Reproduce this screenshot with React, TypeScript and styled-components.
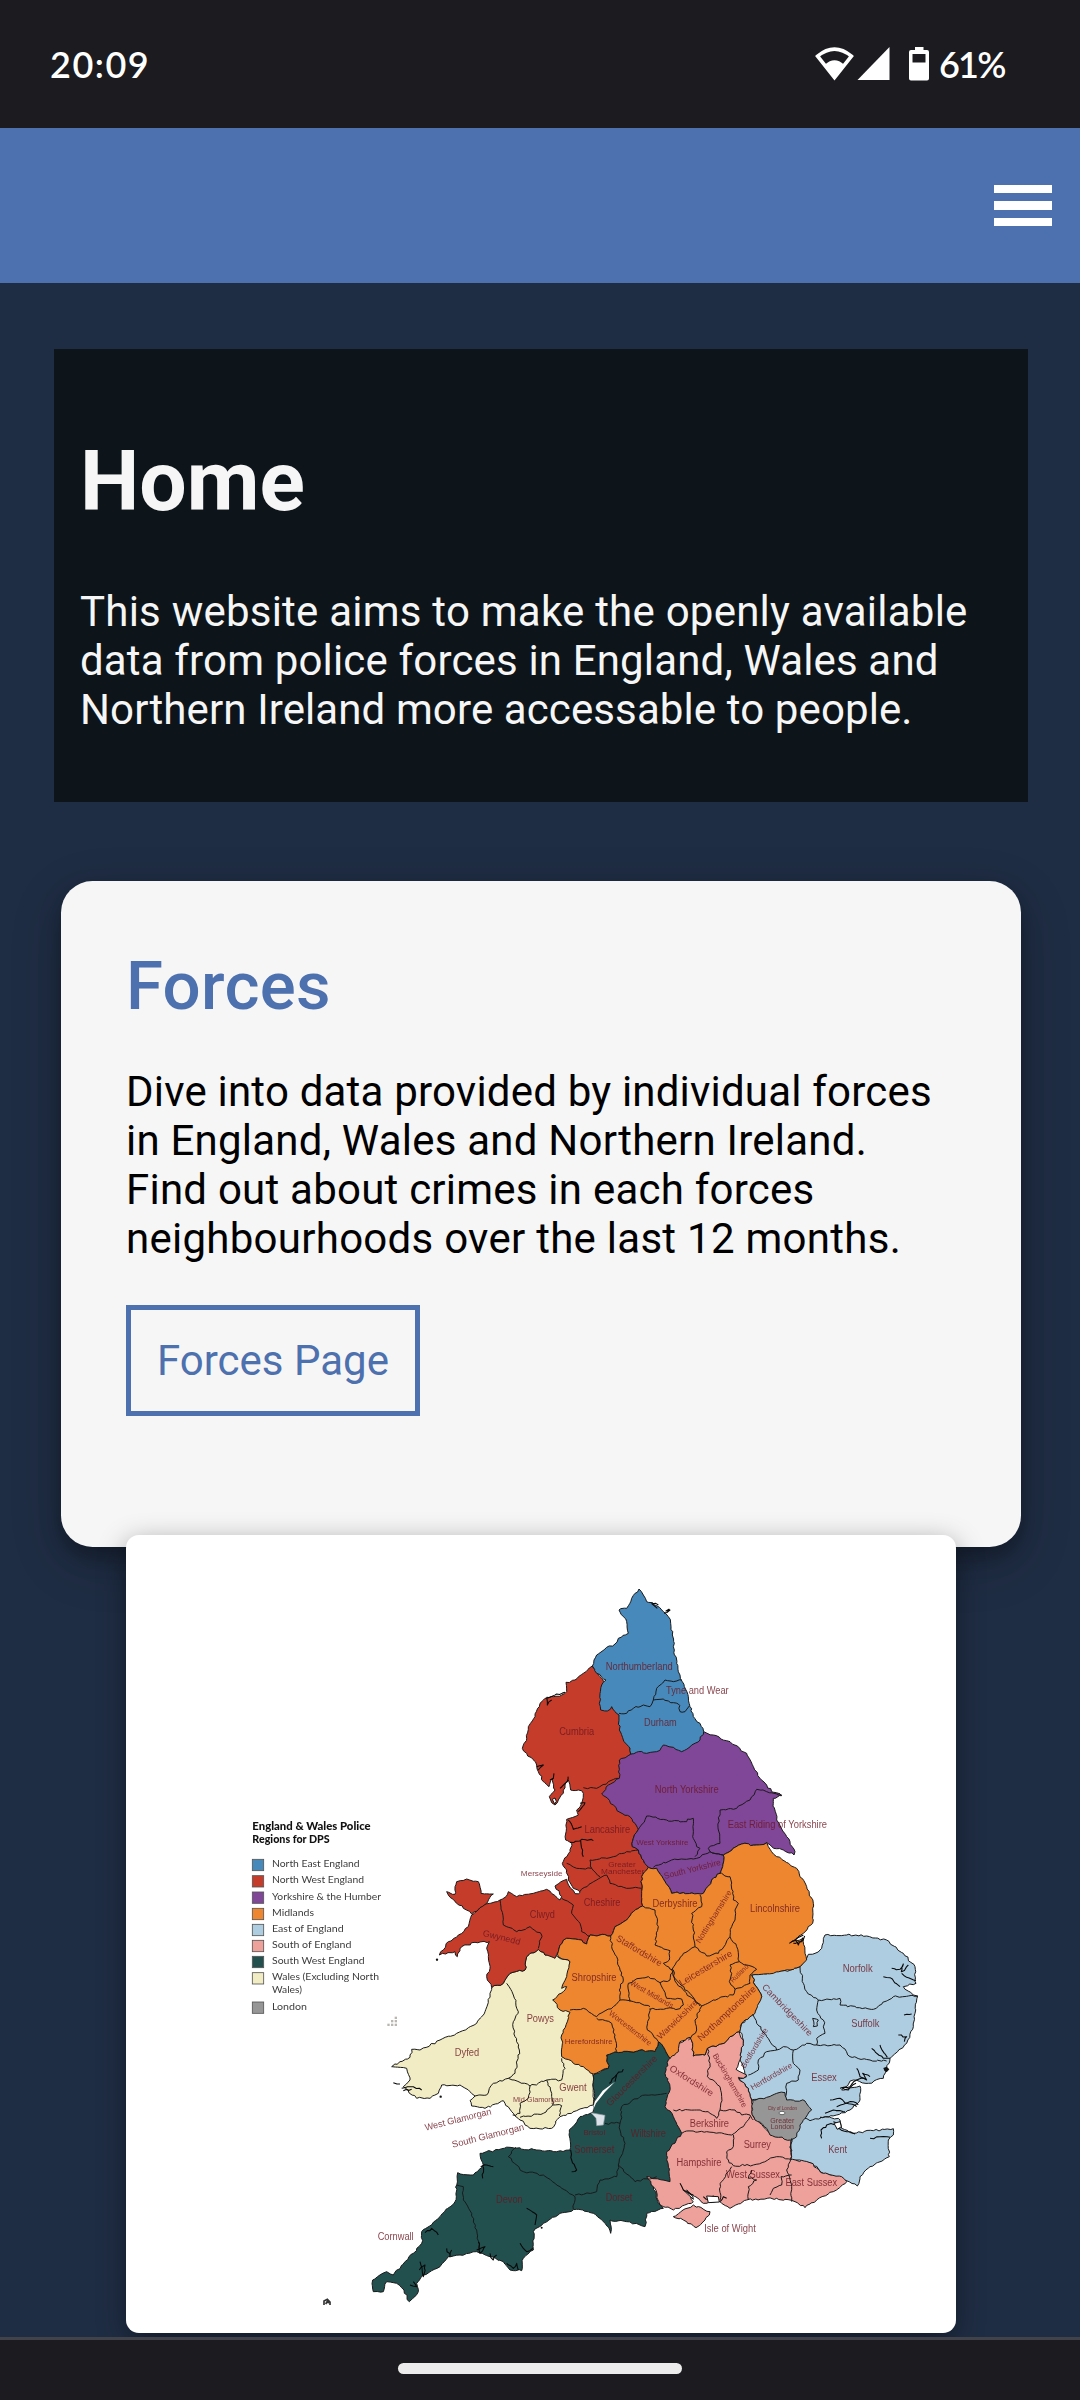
import React from "react";
import styled, { createGlobalStyle } from "styled-components";

const GlobalStyle = createGlobalStyle`
  *, *::before, *::after { box-sizing: border-box; }
  body { margin: 0; background: #1f2d44; font-family: Roboto, "Liberation Sans", sans-serif; font-size: 42px; }
`;

const Screen = styled.div`
  display: flex;
  flex-direction: column;
  width: 1080px;
  height: 2400px;
  overflow: hidden;
  background: #1f2d44;
`;

const StatusBar = styled.header`
  flex: none;
  display: flex;
  align-items: center;
  justify-content: space-between;
  height: 128px;
  padding: 0 75px 0 50px;
  background: #1c1b20;
  color: #fff;
  font: 600 36px/44px Lato, "Open Sans", sans-serif;
`;

const Clock = styled.span`
  letter-spacing: 1.5px;
`;

const Indicators = styled.div`
  display: flex;
  align-items: center;
`;

const StatusIcons = styled.svg`
  width: 116px;
  height: 36px;
  margin-right: 9px;
`;

const Percent = styled.span`
  width: 66px;
  white-space: nowrap;
  letter-spacing: -1.8px;
`;

const NavBar = styled.nav`
  flex: none;
  display: flex;
  align-items: center;
  justify-content: flex-end;
  height: 155px;
  padding: 0 28px;
  background: #4d70ae;
`;

const MenuButton = styled.button`
  display: flex;
  flex-direction: column;
  gap: 8.2px;
  width: 58px;
  padding: 0;
  border: 0;
  background: none;
`;

const MenuLine = styled.span`
  height: 8.5px;
  background: #fff;
`;

const Main = styled.main`
  flex: 1;
  min-height: 0;
  overflow: hidden;
  padding: 66px 52px 0 54px;
`;

const Hero = styled.section`
  width: 974px;
  height: 453px;
  padding: 84px 26px 0;
  background: #0d151b;
  color: #f6f6f6;
`;

const Title = styled.h1`
  margin: 0 0 56px;
  font-size: 84px;
  line-height: 98px;
  font-weight: 700;
`;

const Copy = styled.p`
  margin: 0;
  font-size: 42px;
  line-height: 49px;
`;

const Line = styled.span<{ $track: number }>`
  display: block;
  white-space: nowrap;
  letter-spacing: ${(p) => p.$track}px;
`;

const Card = styled.section`
  width: 960px;
  height: 666px;
  margin: 79px 0 0 7px;
  padding: 66px 65px 0;
  border-radius: 31.5px;
  background: #f6f6f6;
  color: #000;
  box-shadow: 0 10px 21px rgba(0, 0, 0, 0.3), 0 16px 52px rgba(0, 0, 0, 0.19);
`;

const CardTitle = styled.h2`
  margin: 0 0 41px;
  color: #4d70ae;
  font-size: 67.2px;
  line-height: 79px;
  font-weight: 500;
  letter-spacing: 0.3px;
`;

const PageLink = styled.a`
  display: inline-flex;
  align-items: center;
  height: 111px;
  margin-top: 42px;
  padding: 0 26px;
  border: 5px solid #4d70ae;
  color: #4d70ae;
  line-height: 49px;
`;

const MapFrame = styled.figure`
  position: relative;
  width: 830px;
  height: 798px;
  margin: -12px 0 0 72px;
  border-radius: 13px;
  overflow: hidden;
  background: #fff;
`;

const MapShadow = styled.div`
  border-radius: 13px;
  filter: drop-shadow(0 8px 14px rgba(0, 0, 0, 0.4));
`;

const MapSvg = styled.svg`
  display: block;
  width: 100%;
  height: 100%;
`;

const GestureBar = styled.footer`
  flex: none;
  display: flex;
  justify-content: center;
  height: 63px;
  padding-top: 23px;
  border-top: 3px solid #42434a;
  background: #1c1b20;
`;

const Handle = styled.div`
  width: 284px;
  height: 11px;
  border-radius: 6px;
  background: #ececec;
`;

/* Map outlines are sparse control points; rough() adds small bends between them. */
const noise = (x: number, y: number) => {
  const n = Math.sin(x * 12.9898 + y * 78.233) * 43758.5453;
  return (n - Math.floor(n)) * 2 - 1;
};

function rough(points: string, closed = false): string {
  const p = points.trim().split(/\s+/).map((s) => s.split(",").map(Number));
  if (closed) p.push(p[0]);
  let d = `M${p[0][0]} ${p[0][1]}`;
  for (let i = 1; i < p.length; i++) {
    let [x0, y0] = p[i - 1];
    let [x1, y1] = p[i];
    const flip = x0 > x1 || (x0 === x1 && y0 > y1);
    if (flip) [x0, y0, x1, y1] = [x1, y1, x0, y0];
    const len = Math.hypot(x1 - x0, y1 - y0);
    const steps = Math.max(1, Math.round(len / 9));
    const mids: string[] = [];
    for (let k = 1; k < steps; k++) {
      const x = x0 + ((x1 - x0) * k) / steps;
      const y = y0 + ((y1 - y0) * k) / steps;
      mids.push(`L${(x + noise(x, y) * 3).toFixed(1)} ${(y + noise(y, x) * 3).toFixed(1)}`);
    }
    if (flip) mids.reverse();
    d += mids.join("") + `L${p[i][0]} ${p[i][1]}`;
  }
  return closed ? d + "Z" : d;
}

const C = {
  northEast: "#4789bb",
  northWest: "#c63c2b",
  yorkshire: "#804698",
  midlands: "#ee8630",
  east: "#afcde1",
  south: "#eea09b",
  southWest: "#21504f",
  wales: "#f1ecc4",
  london: "#969696",
};

const regions: [string, string][] = [
  [C.wales, "395,1283 390,1300 375,1355 350,1390 290,1420 240,1440 180,1470 155,1468 150,1492 120,1505 95,1520 140,1525 150,1560 130,1580 170,1615 210,1615 235,1600 245,1575 300,1575 330,1595 345,1608 330,1622 335,1638 375,1645 430,1622 455,1655 480,1680 510,1705 575,1705 600,1670 650,1652 700,1635 700,1530 660,1400 640,1300 630,1205 585,1185 555,1185 535,1168 500,1190 495,1230 450,1240 430,1270"],
  [C.northWest, "697,318 670,340 645,360 618,367 620,395 605,405 580,410 555,415 540,430 525,470 505,500 500,535 487,565 500,580 530,615 535,635 550,665 567,680 578,655 585,690 568,710 575,728 585,735 595,720 610,700 615,675 625,660 632,690 655,690 670,700 665,730 650,750 655,765 620,778 617,840 635,850 630,875 607,910 620,930 625,960 640,985 660,997 645,1001 632,985 620,958 585,978 605,1010 600,1020 560,988 520,1000 470,1010 445,995 438,1010 420,1020 370,1035 335,1065 325,1100 295,1125 265,1145 238,1185 285,1175 292,1190 305,1160 345,1147 388,1145 380,1165 385,1190 390,1225 380,1250 395,1283 430,1270 450,1240 495,1230 500,1190 535,1168 555,1185 585,1195 595,1175 600,1155 620,1135 665,1140 680,1152 690,1125 720,1125 752,1128 765,1100 800,1080 820,1055 848,1038 845,1000 845,950 865,922 845,895 835,870 817,860 820,835 835,808 850,760 800,600 812,582 810,500 760,400"],
  [C.northWest, "290,965 320,957 355,965 363,1000 400,1002 382,1028 335,1062 310,1045 285,1025 265,1005 260,995 285,1003 285,980"],
  [C.yorkshire, "778,600 812,583 900,540 1031,515 1060,525 1110,545 1160,580 1180,620 1200,655 1220,675 1235,695 1265,707 1240,715 1240,730 1250,780 1280,830 1305,875 1302,885 1270,870 1235,860 1220,848 1190,855 1145,852 1090,885 1088,920 1080,940 1055,960 1030,1000 970,998 935,1000 915,965 890,925 865,922 845,895 835,870 817,860 820,835 835,808 810,770 780,757 760,735 725,702 745,675 778,655"],
  [C.northEast, "837,87 850,105 860,125 890,137 910,155 925,170 932,190 937,225 943,270 950,310 960,345 973,380 985,410 990,440 1000,470 1020,490 1031,515 1020,540 995,555 965,575 940,562 910,555 890,575 860,580 835,575 812,582 810,565 790,540 778,510 777,465 755,440 742,453 722,450 718,430 720,400 725,375 738,360 710,340 697,318 710,285 740,262 765,252 775,235 805,220 800,185 790,170 777,150 800,145 815,115"],
  [C.east, "1175,1245 1290,1230 1320,1220 1340,1195 1345,1183 1365,1180 1385,1165 1395,1125 1460,1125 1520,1128 1580,1140 1630,1180 1665,1220 1668,1270 1630,1280 1660,1305 1673,1308 1665,1360 1660,1400 1640,1450 1590,1495 1580,1525 1570,1555 1525,1570 1480,1560 1445,1590 1500,1578 1500,1620 1470,1650 1430,1665 1380,1672 1435,1675 1445,1705 1480,1720 1540,1712 1600,1706 1600,1725 1585,1740 1588,1790 1530,1820 1500,1850 1492,1878 1450,1860 1390,1840 1355,1810 1320,1800 1292,1798 1295,1720 1230,1620 1175,1620 1165,1585 1135,1555 1160,1550 1140,1500 1150,1440 1140,1415 1145,1390 1180,1360 1205,1310 1185,1275"],
  [C.south, "990,1432 998,1450 1000,1488 1035,1485 1042,1465 1092,1450 1110,1430 1138,1415 1150,1440 1140,1500 1128,1528 1160,1545 1150,1555 1135,1552 1165,1585 1175,1620 1180,1670 1230,1720 1292,1735 1292,1798 1350,1808 1390,1840 1445,1850 1460,1865 1420,1895 1370,1920 1335,1943 1305,1925 1250,1915 1160,1920 1110,1945 1080,1925 1030,1930 980,1890 1000,1925 940,1950 900,1935 885,1885 860,1855 850,1700 900,1500 955,1450"],
  [C.southWest, "740,1485 760,1478 810,1475 840,1470 885,1475 895,1445 910,1460 930,1495 925,1500 915,1540 930,1580 915,1640 940,1670 965,1720 920,1775 930,1865 860,1850 880,1880 895,1930 910,1945 860,1960 855,2000 800,1985 750,1980 752,2020 735,1990 700,1960 650,1948 600,1960 550,1990 520,2015 520,2070 490,2095 485,2132 450,2130 430,2105 390,2090 350,2075 300,2085 265,2090 240,2120 190,2145 170,2170 175,2195 148,2225 132,2190 110,2170 80,2165 70,2195 40,2195 38,2160 80,2135 100,2145 160,2080 185,2050 185,2015 240,1970 285,1925 293,1838 340,1845 370,1815 360,1780 450,1762 530,1770 590,1775 630,1770 628,1710 660,1670 700,1655 703,1630 700,1545 745,1525"],
  [C.midlands, "865,922 890,925 915,965 935,1000 970,998 1030,1000 1055,960 1080,940 1088,920 1090,885 1145,852 1190,855 1220,848 1225,860 1250,890 1310,925 1340,980 1360,1030 1358,1090 1330,1120 1295,1145 1330,1135 1335,1180 1340,1200 1320,1220 1290,1230 1240,1240 1175,1245 1185,1275 1205,1310 1185,1360 1145,1390 1138,1415 1110,1430 1092,1450 1042,1465 1035,1485 1000,1488 998,1450 990,1432 960,1445 955,1475 930,1495 910,1460 895,1445 885,1475 840,1470 810,1475 760,1478 740,1485 745,1525 700,1542 670,1520 640,1510 605,1490 605,1425 630,1357 600,1350 578,1320 610,1295 620,1280 605,1285 620,1250 630,1205 595,1190 595,1175 600,1155 620,1135 665,1140 680,1152 690,1125 720,1125 752,1128 765,1100 800,1080 820,1055 848,1038 845,1000 845,950"],
  [C.london, "1178,1620 1220,1612 1250,1600 1275,1598 1280,1620 1335,1623 1355,1650 1335,1675 1320,1695 1310,1730 1292,1740 1255,1732 1230,1725 1220,1705 1185,1680 1175,1655"],
  [C.south, "940,1970 1000,1935 1050,1955 1035,1980 1008,2003 970,1980"],
];

const countyLines = [
  "777,460 800,460 820,445 850,435 870,440 880,420 900,418 940,428 955,432 960,455 975,455 988,438",
  "880,420 890,385 915,360 940,365 965,360",
  "670,683 710,685 745,665 775,655",
  "1265,705 1220,695 1190,688 1170,720 1130,745 1080,750 1075,810 1080,850 1045,865 1050,875 1090,885",
  "835,808 860,768 920,780 970,785 1000,775 998,830 1010,860 1020,865 1005,890",
  "880,922 935,900 1010,895 1050,875 1090,885",
  "620,910 650,925 695,925 720,950",
  "695,925 690,900 760,890 800,875 835,870",
  "660,995 710,960 740,945 750,970 800,985 845,985",
  "420,1020 430,1095 470,1115 510,1100 545,1125 535,1165",
  "605,1015 640,1035 635,1060 660,1090 665,1115 690,1130",
  "848,1038 885,1050 895,1100 885,1155 930,1172 928,1200 910,1210 940,1230",
  "1020,1005 1025,1040 995,1060 1000,1110 1005,1160",
  "1005,1160 1040,1188 1075,1180 1110,1130",
  "1080,940 1110,950 1120,1020 1135,1030 1125,1050 1125,1080 1115,1100 1110,1130 1130,1160 1138,1205",
  "1005,1160 970,1180 950,1205 935,1230 950,1270 990,1310 1025,1338 1060,1320 1120,1305 1125,1288",
  "1138,1205 1110,1215 1115,1240 1108,1265 1125,1288 1170,1270 1170,1245 1190,1228 1160,1215 1138,1205",
  "1025,1338 1005,1380 1010,1410 985,1440",
  "752,1128 755,1160 770,1190 780,1230 790,1260 778,1290 780,1320",
  "630,1350 670,1345 710,1370 760,1340 780,1320 820,1325 870,1340",
  "810,1325 805,1270 840,1255 865,1250 900,1268 920,1315 965,1317 970,1335 960,1346 920,1345 870,1348",
  "900,1268 930,1260 940,1230 945,1255 990,1300 1020,1338",
  "710,1375 755,1390 765,1425 770,1475",
  "870,1345 862,1410 895,1445",
  "440,1270 460,1305 475,1355 460,1385 465,1430 478,1470 465,1540 445,1555",
  "445,1555 510,1578 560,1560 605,1560 615,1525 605,1495",
  "445,1555 400,1570 380,1605 345,1608",
  "510,1578 505,1615 480,1630 480,1660 458,1665",
  "560,1560 575,1600 578,1635 605,1637 598,1668",
  "480,1672 550,1660 578,1635",
  "1320,1220 1330,1270 1340,1295 1375,1320",
  "1375,1320 1440,1315 1440,1335 1490,1343 1540,1348 1600,1310 1673,1308",
  "1375,1320 1370,1350 1390,1380 1395,1420 1370,1435 1370,1455",
  "1358,1375 1375,1380 1372,1398 1360,1400 1358,1375",
  "1370,1455 1440,1455 1470,1490 1530,1500 1580,1503",
  "1370,1455 1340,1450 1300,1470 1270,1460 1250,1470 1220,1430 1190,1390 1178,1362",
  "1250,1470 1220,1475 1195,1500 1195,1530 1165,1545",
  "1300,1470 1300,1510 1320,1530 1315,1560 1280,1570 1277,1610",
  "1335,1675 1350,1682 1385,1672",
  "1295,1735 1292,1798",
  "1042,1465 1050,1510 1042,1550 1080,1580 1085,1610 1080,1650",
  "940,1650 1010,1650 1045,1655 1070,1675 1080,1650 1125,1650 1145,1665 1170,1665 1180,1680",
  "965,1720 980,1713 1040,1715 1115,1725 1150,1700 1170,1670",
  "1120,1725 1120,1760 1100,1775 1105,1800 1120,1817 1180,1815 1250,1790 1292,1798",
  "1115,1820 1080,1870 1080,1920",
  "1292,1798 1280,1830 1295,1880 1295,1925",
  "1165,1920 1165,1880 1190,1860 1165,1855 1175,1830",
  "1230,1905 1240,1885 1265,1875 1263,1850 1295,1845",
  "290,1875 310,1880 310,1920 335,1960 350,2010 360,2070",
  "468,1762 445,1790 490,1835 550,1845 600,1880 645,1910 640,1948",
  "645,1905 710,1895 720,1860 770,1850 775,1815 825,1865 890,1850",
  "775,1815 795,1750 780,1710 785,1640 840,1610 920,1600",
  "735,1690 780,1690",
];

const inlets = [
  "615,397 590,402 560,412", "560,412 562,435 575,420", "530,620 550,615 535,630", "570,660 580,655 582,640", "600,685 622,665 624,650",
  "895,135 875,131 892,145", "912,160 930,150 918,153 928,147",
  "660,730 675,728 655,755", "625,780 640,808 665,800", "630,847 665,838 700,842", "662,842 670,890",
  "1288,1150 1310,1135 1330,1125", "1300,1150 1325,1145 1334,1128", "1305,1140 1315,1155 1328,1133",
  "1595,1225 1620,1228 1630,1212 1624,1235 1645,1215", "1570,1250 1590,1253 1620,1280", "1625,1240 1640,1252 1668,1262",
  "1632,1365 1655,1362", "1615,1425 1640,1430 1633,1445", "1535,1465 1570,1495 1590,1495", "1560,1455 1582,1492",
  "1440,1585 1470,1580 1490,1560 1515,1555", "1445,1582 1465,1590 1488,1570", "1490,1525 1500,1550 1520,1560 1508,1540 1530,1550",
  "1410,1620 1440,1615 1460,1630 1490,1640", "1430,1640 1450,1633 1480,1625 1495,1635", "1395,1660 1420,1650 1455,1655",
  "1385,1735 1383,1710 1400,1695 1430,1690", "1430,1705 1460,1715 1485,1722", "1530,1735 1560,1730 1590,1732", "1420,1685 1440,1690 1435,1705",
  "960,1870 970,1890 1000,1905", "1030,1910 1050,1925 1060,1908 1075,1922", "1080,1925 1090,1910 1100,1915",
  "362,1820 380,1815 400,1820", "370,1820 368,1855", "500,1945 530,1965 525,1995", "480,2050 500,2075 518,2065",
  "355,2045 360,2080 375,2060 350,2070", "260,2065 270,2090 275,2070", "180,2105 190,2150 195,2115 178,2130", "150,2175 170,2180 160,2165",
  "195,2018 215,2005 235,2025", "390,2080 400,2100 410,2085", "440,2110 460,2125 470,2110 475,2130",
  "748,1570 765,1550 790,1528", "765,1565 770,1545", "632,1770 635,1800 650,1830 635,1835",
  "100,1568 120,1572", "125,1585 160,1580 185,1590", "130,1592 155,1588",
];

type Label = [string, number, number, number, number?, number?];
const labels: Label[] = [
  ["Northumberland", 838, 320, 201], ["Tyne and Wear", 1012, 393, 188], ["Durham", 901, 488, 98], ["Cumbria", 650, 515, 105],
  ["North Yorkshire", 980, 690, 192], ["Lancashire", 742, 809, 137], ["West Yorkshire", 907, 846, 157, 23], ["Merseyside", 545, 941, 125, 23],
  ["Greater", 786, 914, 82, 23], ["Manchester", 788, 934, 130, 23], ["Cheshire", 726, 1028, 110], ["Clwyd", 547, 1064, 75],
  ["Gwynedd", 425, 1132, 115, 27, 14], ["Derbyshire", 945, 1031, 135], ["East Riding of Yorkshire", 1252, 795, 298],
  ["South Yorkshire", 997, 927, 175, 26, -14], ["Nottinghamshire", 1061, 1070, 182, 24, -58], ["Lincolnshire", 1245, 1045, 150],
  ["Staffordshire", 838, 1172, 155, 28, 31], ["Leicestershire", 1037, 1224, 180, 28, -31], ["Shropshire", 702, 1254, 135],
  ["West Midlands", 876, 1303, 145, 23, 30], ["Warwickshire", 952, 1378, 158, 26, -44], ["Worcestershire", 811, 1404, 155, 24, 38],
  ["Northamptonshire", 1100, 1360, 228, 28, -43], ["Rutland", 1138, 1240, 68, 21, -45], ["Norfolk", 1493, 1227, 90], ["Suffolk", 1516, 1390, 85],
  ["Cambridgeshire", 1282, 1350, 205, 27, 46], ["Bedfordshire", 1183, 1464, 135, 23, -59], ["Hertfordshire", 1234, 1549, 140, 24, -30],
  ["Essex", 1392, 1553, 77], ["Kent", 1433, 1769, 57], ["Buckinghamshire", 1110, 1561, 182, 24, 60], ["Oxfordshire", 995, 1562, 150, 28, 32],
  ["Berkshire", 1048, 1691, 118], ["Surrey", 1192, 1754, 82], ["Hampshire", 1017, 1808, 135], ["West Sussex", 1179, 1844, 162],
  ["East Sussex", 1354, 1868, 155], ["Isle of Wight", 1110, 2005, 155], ["City of London", 1267, 1644, 88, 14], ["Greater", 1267, 1682, 72, 23],
  ["London", 1267, 1699, 70, 23], ["Powys", 541, 1375, 82], ["Dyfed", 321, 1477, 73], ["Herefordshire", 686, 1444, 143, 24],
  ["Gwent", 639, 1584, 82], ["Mid Glamorgan", 534, 1619, 150, 22], ["West Glamorgan", 294, 1678, 205, 28, -14],
  ["South Glamorgan", 384, 1727, 222, 28, -14], ["Gloucestershire", 815, 1562, 202, 28, -45], ["Bristol", 703, 1716, 65, 24],
  ["Somerset", 703, 1769, 120], ["Wiltshire", 865, 1720, 105], ["Devon", 448, 1918, 80], ["Dorset", 777, 1912, 80], ["Cornwall", 107, 2031, 108],
];

const MapLabel = styled.text`
  font-family: "Liberation Sans", Arial, sans-serif;
  fill: #6a1620;
  fill-opacity: 0.82;
  text-anchor: middle;
`;

const LegendText = styled.text<{ $bold?: boolean }>`
  font-family: Lato, "Open Sans", sans-serif;
  font-size: ${(p) => (p.$bold ? 31 : 29)}px;
  font-weight: ${(p) => (p.$bold ? 900 : 400)};
  fill: ${(p) => (p.$bold ? "#111" : "#3c3c3c")};
`;

const legend: { color: string; y: number; lines: [string, number][] }[] = [
  { color: C.northEast, y: 897, lines: [["North East England", 263]] },
  { color: C.northWest, y: 946, lines: [["North West England", 276]] },
  { color: C.yorkshire, y: 995, lines: [["Yorkshire & the Humber", 327]] },
  { color: C.midlands, y: 1044, lines: [["Midlands", 126]] },
  { color: C.east, y: 1092, lines: [["East of England", 215]] },
  { color: C.south, y: 1140, lines: [["South of England", 238]] },
  { color: C.southWest, y: 1188, lines: [["South West England", 278]] },
  { color: C.wales, y: 1237, lines: [["Wales (Excluding North", 321], ["Wales)", 90]] },
  { color: C.london, y: 1325, lines: [["London", 105]] },
];

function PoliceMap() {
  return (
    <MapSvg viewBox="-702 -75 2490 2394" role="img" aria-label="England & Wales Police Regions for DPS">
      <g stroke="#1a1a1a" strokeWidth="3" strokeLinejoin="round">
        {regions.map(([fill, pts], i) => (
          <path key={i} d={rough(pts, true)} fill={fill} />
        ))}
      </g>
      <path d="M698 1652L704 1625L728 1592L765 1565L735 1596L708 1630Z" fill="#fff" />
      <path d="M693 1658L735 1666L730 1695L710 1697L708 1675Z" fill="#dbe2ea" stroke="#8d989f" strokeWidth="2" />
      <g fill="none" stroke="#1a1a1a" strokeWidth="3" strokeLinejoin="round">
        {countyLines.map((pts, i) => (
          <path key={i} d={rough(pts)} />
        ))}
      </g>
      <g fill="none" stroke="#080808" strokeWidth="3.2" strokeLinejoin="round">
        {inlets.map((pts, i) => (
          <path key={i} d={rough(pts)} />
        ))}
      </g>
      <path d="M577 718L585 714L589 724L584 732Z M1422 1690L1440 1685L1444 1700L1432 1708Z M1040 1908L1075 1910L1078 1926L1045 1928Z M970 1890L998 1908L1000 1918Z" fill="#fff" stroke="#111" strokeWidth="3" />
      <ellipse cx="1266" cy="1659" rx="9" ry="5" fill="#fff" stroke="#333" strokeWidth="2" />
      <g fill="#111">
        <circle cx="231" cy="1199" r="3.5" />
        <circle cx="242" cy="1610" r="3.5" />
        <path d="M1570 1524L1580 1520L1588 1528L1580 1537L1573 1532Z" />
        <circle cx="545" cy="2003" r="3" />
      </g>
      <path d="M-108 2235V2223L-98 2218L-90 2226V2235M-103 2232L-98 2224L-94 2230" fill="none" stroke="#333" strokeWidth="5" />
      {labels.map(([text, x, y, width, size = 30, angle = 0]) => (
        <MapLabel
          key={`${text}${x}`}
          transform={`translate(${x} ${y}) rotate(${angle})`}
          dy={size * 0.34}
          fontSize={size}
          textLength={width}
          lengthAdjust="spacingAndGlyphs"
        >
          {text}
        </MapLabel>
      ))}
      <LegendText $bold x="-323" y="809" textLength="355" lengthAdjust="spacingAndGlyphs">England &amp; Wales Police</LegendText>
      <LegendText $bold x="-323" y="848" textLength="232" lengthAdjust="spacingAndGlyphs">Regions for DPS</LegendText>
      {legend.map(({ color, y, lines }) => (
        <g key={color}>
          <rect x="-323" y={y + 1} width="34" height="34" fill={color} stroke="#555" strokeWidth="2.5" />
          {lines.map(([line, width], i) => (
            <LegendText key={line} x="-264" y={y + 24 + i * 39} textLength={width} lengthAdjust="spacingAndGlyphs">
              {line}
            </LegendText>
          ))}
        </g>
      ))}
      <g fill="#b9b7b0">
        {[[104, 1370], [104, 1380], [104, 1391], [93, 1380], [93, 1391], [82, 1391]].map(([x, y]) => (
          <rect key={`${x}-${y}`} x={x} y={y} width="7" height="7" />
        ))}
      </g>
    </MapSvg>
  );
}

export default function App() {
  return (
    <Screen>
      <GlobalStyle />
      <StatusBar>
        <Clock>20:09</Clock>
        <Indicators>
          <StatusIcons viewBox="0 0 116 36" aria-hidden="true">
            <path d="M3.6 10.2Q20.5-3.8 37.4 10.2L20.5 31.5Z" fill="none" stroke="#fff" strokeWidth="3.6" />
            <path d="M11 18.5Q20.5 9.8 30 18.5L20.5 33Z" fill="#fff" />
            <path d="M75.5 1V34H43.5Z" fill="#fff" />
            <path fillRule="evenodd" d="M101 1H109.500V4H113Q115 4 115 6V32.500Q115 34.500 113 34.500H97Q95 34.500 95 32.500V6Q95 4 97 4H101ZM98.500 8V16.500H111.500V8Z" fill="#fff" />
          </StatusIcons>
          <Percent>61%</Percent>
        </Indicators>
      </StatusBar>
      <NavBar>
        <MenuButton aria-label="Menu">
          <MenuLine />
          <MenuLine />
          <MenuLine />
        </MenuButton>
      </NavBar>
      <Main>
        <Hero>
          <Title>Home</Title>
          <Copy>
            <Line $track={0.23}>This website aims to make the openly available</Line>
            <Line $track={0.16}>data from police forces in England, Wales and</Line>
            <Line $track={0.11}>Northern Ireland more accessable to people.</Line>
          </Copy>
        </Hero>
        <Card>
          <CardTitle>Forces</CardTitle>
          <Copy>
            <Line $track={0.2}>Dive into data provided by individual forces</Line>
            <Line $track={0.23}>in England, Wales and Northern Ireland.</Line>
            <Line $track={0.23}>Find out about crimes in each forces</Line>
            <Line $track={0.27}>neighbourhoods over the last 12 months.</Line>
          </Copy>
          <PageLink>Forces Page</PageLink>
        </Card>
        <MapShadow>
          <MapFrame>
            <PoliceMap />
          </MapFrame>
        </MapShadow>
      </Main>
      <GestureBar>
        <Handle />
      </GestureBar>
    </Screen>
  );
}
